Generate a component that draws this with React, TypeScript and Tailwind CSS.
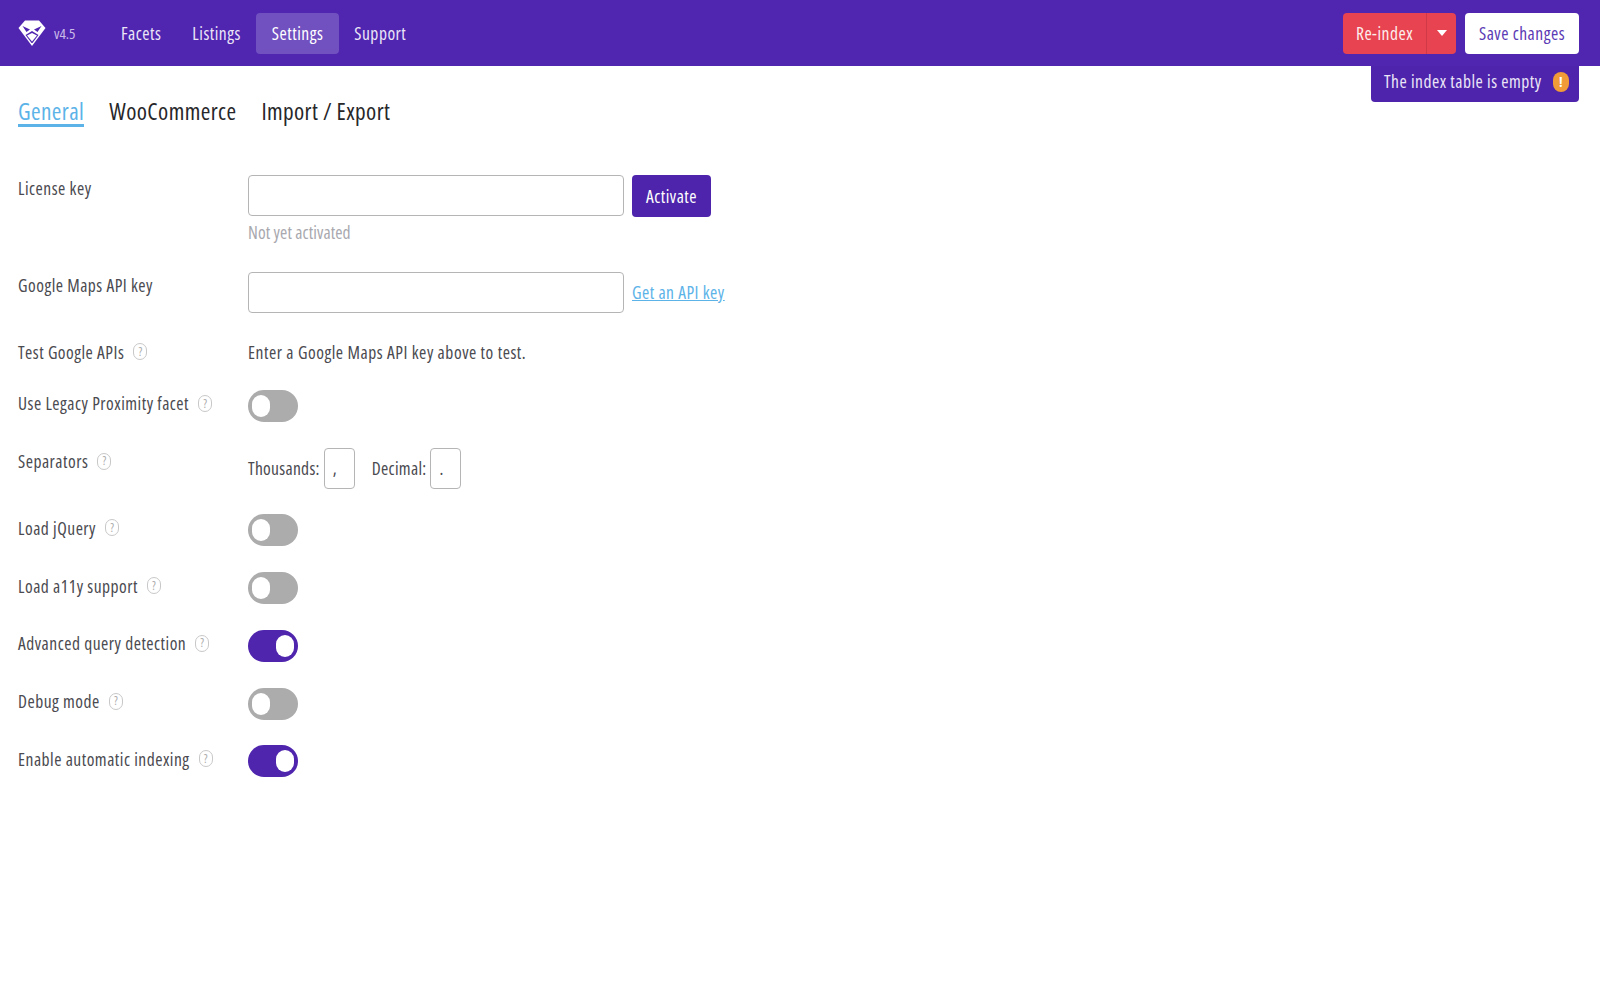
const font = "font-['Open_Sans','Noto_Sans',sans-serif]";

function Help() {
  return (
    <span className="ml-[9px] w-[14px] h-[17px] rounded-full border border-[#c8c8c8] text-[#ababab] text-[12px] leading-none tracking-normal flex items-center justify-center shrink-0">
      ?
    </span>
  );
}

function Label({ text, help = true }: { text: string; help?: boolean }) {
  return (
    <div className="w-[230px] shrink-0 flex items-center h-[27px] text-[#4a4a50] whitespace-nowrap">
      <span>{text}</span>
      {help && <Help />}
    </div>
  );
}

function Toggle({ on = false }: { on?: boolean }) {
  return (
    <div className={`w-[50px] h-[32px] rounded-full flex items-center px-[4px] ${on ? "bg-[#4f25ae] justify-end" : "bg-[#acacac] justify-start"}`}>
      <div className="w-[18px] h-[22px] rounded-full bg-white" />
    </div>
  );
}

function ToggleRow({ label, on }: { label: string; on?: boolean }) {
  return (
    <div className="flex items-start">
      <Label text={label} />
      <Toggle on={on} />
    </div>
  );
}

function Logo() {
  return (
    <svg viewBox="0 0 28 28" className="w-[28px] h-[28px]" fill="none">
      <path d="M7 1.5h14l6.5 7.5L14 27 .5 9z" fill="#fff" />
      <path d="M4.5 7l7.5 3.5-3.5 2.5zM23.5 7L16 10.5l3.5 2.5z" fill="#5025b0" />
      <path d="M14 12l-6.5 4 6 8h1l6-8z" fill="#5025b0" />
      <path d="M14 14l-5 2.5 5 6 5-6z" fill="#fff" />
    </svg>
  );
}

export default function App() {
  return (
    <div className={`min-h-[1000px] bg-white text-[17.5px] tracking-[0.5px] [font-stretch:75%] ${font}`}>
      <header className="h-[66px] bg-[#5025b0] flex items-center justify-between pl-[18px] pr-[21px]">
        <div className="flex items-center">
          <Logo />
          <span className="ml-[8px] w-[51.5px] text-[15px] tracking-normal text-[#c9bbe8]">v4.5</span>
          <nav className="flex items-center text-[#ebe5f7]">
            <a className="h-[41px] flex items-center px-[15.5px]">Facets</a>
            <a className="h-[41px] flex items-center px-[15.5px]">Listings</a>
            <a className="h-[41px] flex items-center px-[15.5px] rounded bg-[#7150bf] text-white">Settings</a>
            <a className="h-[41px] flex items-center px-[15.5px]">Support</a>
          </nav>
        </div>
        <div className="flex items-center gap-[9px]">
          <div className="flex h-[41px] rounded bg-[#e84350] text-[#fdeeee]">
            <span className="w-[84px] flex items-center justify-center border-r border-[#cf3a46]">Re-index</span>
            <span className="w-[29px] flex items-center justify-center">
              <svg viewBox="0 0 10 6" className="w-[10px] h-[6px]"><path d="M0 0h10L5 6z" fill="#fff" /></svg>
            </span>
          </div>
          <button className="h-[41px] w-[114px] rounded bg-white text-[#5b3ab5]">Save changes</button>
        </div>
      </header>

      <div className="flex justify-end pr-[21px]">
        <div className="h-[36px] w-[208px] rounded-b bg-[#4d24ab] text-[#ebe5f7] flex items-center justify-between pl-[13px] pr-[10px] pb-[5px] whitespace-nowrap">
          <span>The index table is empty</span>
          <span className="w-[16px] h-[20px] rounded-full bg-[#f19a38] text-white text-[14px] font-bold flex items-center justify-center">!</span>
        </div>
      </div>

      <main className="px-[18px]">
        <div className="-mt-[5px] flex gap-[25px] text-[23.2px] tracking-[0.4px] text-[#27272a] h-[33px]">
          <span className="text-[#5cb3e8] border-b-[3px] border-[#5cb3e8] h-[30px] leading-[29px]">General</span>
          <span className="leading-[29px]">WooCommerce</span>
          <span className="leading-[29px]">Import / Export</span>
        </div>

        <div className="mt-[45px] flex flex-col gap-[25.7px]">
          <div className="flex items-start">
            <Label text="License key" help={false} />
            <div>
              <div className="flex items-start gap-[8px]">
                <input className="w-[376px] h-[41px] border border-[#b5b5b5] rounded bg-white" />
                <button className="w-[79px] h-[42px] rounded bg-[#4d24ab] text-white">Activate</button>
              </div>
              <div className="mt-[2px] h-[27px] leading-[27px] tracking-[0.1px] text-[#a8a8ae]">Not yet activated</div>
            </div>
          </div>

          <div className="flex items-start">
            <Label text="Google Maps API key" help={false} />
            <div className="flex items-center gap-[8px]">
              <input className="w-[376px] h-[41px] border border-[#b5b5b5] rounded bg-white" />
              <a className="text-[#5cb3e8] underline">Get an API key</a>
            </div>
          </div>

          <div className="flex items-start h-[26px]">
            <Label text="Test Google APIs" />
            <div className="h-[27px] flex items-center tracking-[0.55px] text-[#4a4a50]">Enter a Google Maps API key above to test.</div>
          </div>

          <ToggleRow label="Use Legacy Proximity facet" />

          <div className="flex items-start">
            <Label text="Separators" />
            <div className="flex items-center text-[#4a4a50] tracking-[0.3px]">
              <span>Thousands:</span>
              <input readOnly value="," className="ml-[4px] w-[31px] h-[41px] border border-[#b5b5b5] rounded pl-[8px]" />
              <span className="ml-[17px]">Decimal:</span>
              <input readOnly value="." className="ml-[4px] w-[31px] h-[41px] border border-[#b5b5b5] rounded pl-[8px]" />
            </div>
          </div>

          <ToggleRow label="Load jQuery" />
          <ToggleRow label="Load a11y support" />
          <ToggleRow label="Advanced query detection" on />
          <ToggleRow label="Debug mode" />
          <ToggleRow label="Enable automatic indexing" on />
        </div>
      </main>
    </div>
  );
}
